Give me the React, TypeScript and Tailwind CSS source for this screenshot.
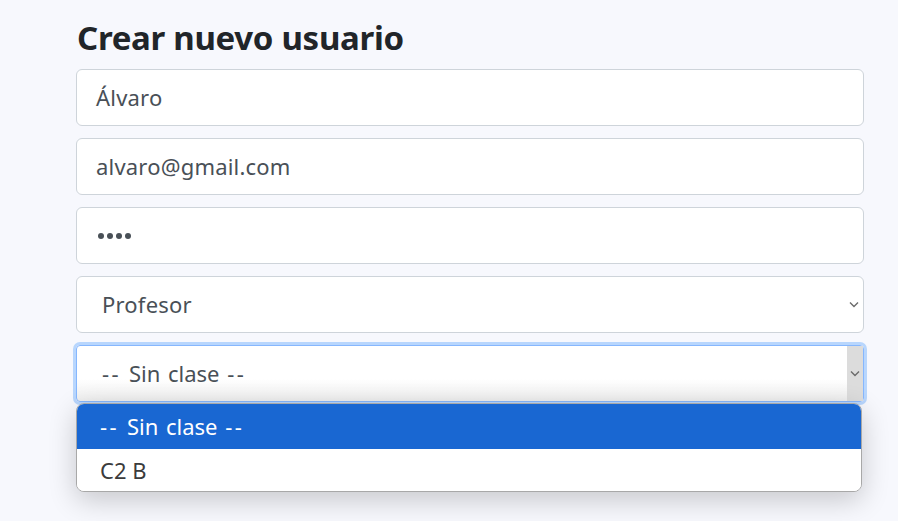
import React from "react";

const font = { fontFamily: '"Segoe UI", "Noto Sans", "Open Sans", sans-serif' };

function Chevron() {
  return (
    <svg width="10" height="7" viewBox="0 0 10 7" className="block">
      <path d="M1 1.5 L5 5.5 L9 1.5" fill="none" stroke="#6b6b6b" strokeWidth="1.4" />
    </svg>
  );
}

function Dashes() {
  return <span className="tracking-[2.5px]">--</span>;
}

function Field({ children }: { children: React.ReactNode }) {
  return (
    <div className="h-[57px] w-full rounded-[6px] border border-[#ced4da] bg-white flex items-center pl-[19px] text-[22px] text-[#495057] tracking-[0.2px]">
      {children}
    </div>
  );
}

function SinClase() {
  return (
    <span className="[word-spacing:2px]">
      <Dashes /> Sin clase <Dashes />
    </span>
  );
}

export default function App() {
  return (
    <div className="min-h-[521px] w-full bg-[#f7f8fd] overflow-hidden" style={font}>
      <div className="ml-[76px] w-[788px] pt-[14px]">
        <h1 className="text-[33px] font-bold text-[#212529] leading-[48px] mb-[7px] tracking-[-0.3px] pl-[1px]">
          Crear nuevo usuario
        </h1>
        <div className="flex flex-col gap-[12px]">
          <Field>Álvaro</Field>
          <Field>alvaro@gmail.com</Field>
          <Field>
            <span className="flex gap-[3px] pl-[2px]">
              <span className="w-[6px] h-[6px] rounded-full bg-[#495057]" />
              <span className="w-[6px] h-[6px] rounded-full bg-[#495057]" />
              <span className="w-[6px] h-[6px] rounded-full bg-[#495057]" />
              <span className="w-[6px] h-[6px] rounded-full bg-[#495057]" />
            </span>
          </Field>
          <div className="h-[57px] w-full rounded-[6px] border border-[#ced4da] bg-white flex items-center justify-between pl-[25px] pr-[4px] text-[22px] text-[#495057] tracking-[0.2px]">
            <span>Profesor</span>
            <Chevron />
          </div>
          <div className="relative">
            <div className="h-[57px] w-full rounded-[4px] border border-[#86b7fe] bg-gradient-to-b from-white from-60% to-[#eeeeee] flex items-stretch text-[22px] text-[#495057] shadow-[0_0_0_3px_#b8d6fd]">
              <div className="flex-1 flex items-center pl-[25px]">
                <SinClase />
              </div>
              <div className="w-[16px] bg-[#dcdcdc] flex items-center justify-center">
                <Chevron />
              </div>
            </div>
            <div className="absolute left-0 top-[58px] w-[786px] rounded-[8px] border border-[#a8a8a8] bg-white overflow-hidden shadow-[0_8px_28px_rgba(0,0,0,0.2)] text-[22px]">
              <div className="h-[45px] bg-[#1967d2] text-white flex items-center pl-[23px]">
                <SinClase />
              </div>
              <div className="h-[42px] bg-white text-[#3b3b3b] flex items-center pl-[23px]">C2 B</div>
            </div>
          </div>
        </div>
      </div>
    </div>
  );
}
